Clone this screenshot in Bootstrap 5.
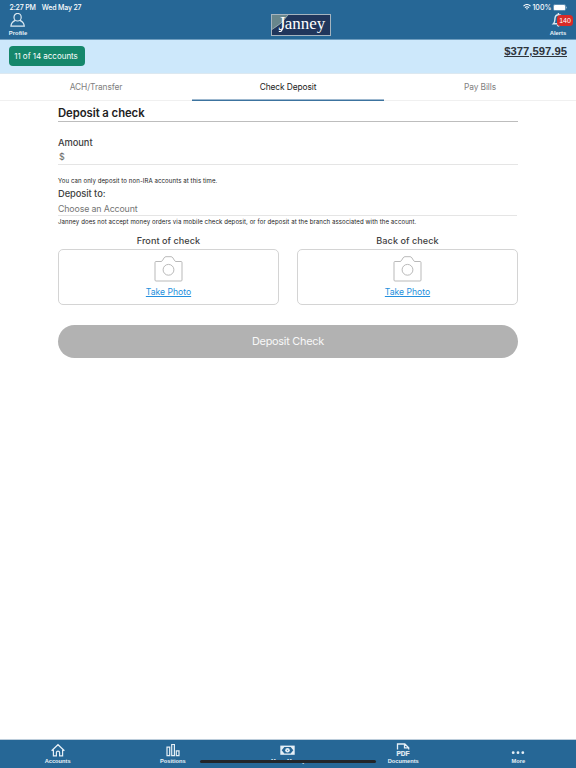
<!DOCTYPE html>
<html lang="en">
<head>
<meta charset="utf-8">
<meta name="viewport" content="width=device-width, initial-scale=1">
<title>Janney – Check Deposit</title>
<link href="https://cdn.jsdelivr.net/npm/bootstrap@5.3.0/dist/css/bootstrap.min.css" rel="stylesheet">
<style>
html,body{height:100%}
body{font-family:Inter,"Liberation Sans",sans-serif;color:#333;background:#fff;overflow:hidden}
svg{display:block;flex:none}
.arial{font-family:"Liberation Sans",Arial,sans-serif}
.app-header{height:40px;background:#266796;border-bottom:1px solid #6e9dbf;color:#fff}
.status-line{height:13px;padding:1px 9px 0 9.5px;font-size:7px;line-height:13px;font-weight:500;letter-spacing:-.18px}
.status-left{gap:6px}
.status-right{gap:1.5px;letter-spacing:.05px}
.head-btn{width:36px;font-size:5.9px;line-height:8px;font-weight:700;color:#e8f1f7}
.head-btn svg{margin-bottom:1.5px}
.alert-count{left:17px;top:2px;width:16px;height:11px;border-radius:3.5px;background:#d92b27;color:#fff;font-size:7px;line-height:11px;font-weight:400}
.brand{width:60px;height:22px;margin:1px 0 0 26px}
.summary{height:34px;background:#cde8fb;border-bottom:1px solid #dce8f0;padding:6px 9px 0}
.acct-pill{width:76px;height:20px;background:#15876b;color:#fff;border-radius:4px;font-size:8px;line-height:20px;letter-spacing:-.03px;padding-right:2px}
.balance{font-size:11.3px;line-height:10px;font-weight:700;color:#2e343b;text-decoration:underline;text-underline-offset:1px;text-decoration-thickness:1px}
.tabs{height:27px;border-bottom:1px solid #f0f0f0}
.tabs .tab-item{flex:1 1 0;height:27px;font-size:8.4px;line-height:27px;letter-spacing:-.1px;color:#808080;text-align:center;text-decoration:none}
.tabs .tab-item.current{color:#222;box-shadow:inset 0 -1.5px #3c739f}
.deposit-form{padding:0 58px}
.form-heading{height:21px;border-bottom:1px solid #bdbdbd;font-size:11.3px;line-height:25px;font-weight:600;color:#222;margin:0 0 13px;letter-spacing:-.05px}
.field-label{font-size:9.3px;line-height:15px;font-weight:500;color:#404040;height:15px;letter-spacing:-.05px}
.amount-box{height:15px;border-bottom:1px solid #e5e5e5;font-size:9px;line-height:14px;padding-left:1px;color:#666;margin-bottom:10px}
.fine{height:11px;font-size:6.05px;line-height:11px;color:#222;white-space:nowrap;letter-spacing:.092px}
.account-box{height:15px;border-bottom:1px solid #e5e5e5;margin-right:1px;font-size:8.8px;line-height:16px;color:#757575;letter-spacing:-.13px}
.photo-grid{gap:18px;margin-top:6px}
.photo-col{flex:1 1 0}
.photo-label{height:16px;font-size:9.1px;line-height:16px;font-weight:500;color:#404040;letter-spacing:.05px}
.photo-box{height:56px;border:1px solid #d4d4d4;border-radius:5px;padding-top:6px}
.photo-box a{font-size:8.6px;line-height:12px;color:#248fdd;text-underline-offset:1px;text-decoration-thickness:1px;margin-top:4px}
.submit-btn{height:33px;border:0;border-radius:17px;background:#b2b2b2;color:#f8f8f8;font-size:10.9px;line-height:33px;letter-spacing:-.26px;margin-top:20px;padding:0}
.bottom-nav{height:29px;background:#266796;border-top:1px solid #bccddb;color:#e8f1f7}
.bottom-nav a{flex:1 1 0;color:inherit;text-decoration:none;font-size:5.7px;line-height:7px;font-weight:700;padding-top:3px}
.bottom-nav .ico{height:15px}
.home-bar{left:200px;bottom:4.6px;width:176px;height:3px;border-radius:2px;background:#222529}
</style>
<script src="https://cdn.jsdelivr.net/npm/bootstrap@5.3.0/dist/js/bootstrap.bundle.min.js"></script>
</head>
<body class="d-flex flex-column">
<header class="app-header flex-shrink-0">
  <div class="status-line d-flex justify-content-between">
    <div class="status-left d-flex"><span>2:27 PM</span><span>Wed May 27</span></div>
    <div class="status-right d-flex align-items-center">
      <svg width="8" height="6" viewBox="0 0 8 6" fill="none" stroke="#fff" stroke-width="1.1"><path d="M.5 2.1Q4-1 7.5 2.1M1.9 3.6Q4 1.8 6.1 3.6"/><path d="M2.9 4.6 4 5.8l1.1-1.2Q4 3.9 2.9 4.6z" fill="#fff" stroke="none"/></svg>
      <span>100%</span>
      <svg width="14" height="7" viewBox="0 0 14 7"><rect x=".4" y=".4" width="12.2" height="6.2" rx="1.7" fill="none" stroke="#8bb0cb" stroke-width=".6"/><rect x=".9" y=".9" width="11.2" height="5.2" rx="1.2" fill="#fff"/><path d="M13.4 2.7v1.7" stroke="#a9c5da" stroke-width=".8"/></svg>
    </div>
  </div>
  <div class="d-flex arial">
    <div class="head-btn d-flex flex-column align-items-center me-auto">
      <svg width="16" height="14" viewBox="0 0 16 14" fill="none" stroke="#dce9f2" stroke-width="1.2"><ellipse cx="7.6" cy="4.2" rx="3.6" ry="3.8"/><path d="M5.3 7.4C2.6 8.5 1.2 10.2.9 13.2h13.4C14 10.2 12.6 8.5 9.9 7.4"/></svg>
      <span>Profile</span>
    </div>
    <svg class="brand" viewBox="0 0 60 22"><rect x=".5" y=".5" width="59" height="21" fill="#20365c" stroke="#a5b4bf"/><path d="M1 1h16Q11 10 1 15.5z" fill="#68868c"/><path d="M17 1Q11 10 1 15.5" fill="none" stroke="#a9bcc1" stroke-width=".7"/><path d="M7.8 17.3q3.2 1 3.6-3.3" fill="none" stroke="#fff" stroke-width="1.2"/><text x="7.5" y="15.5" font-family="Liberation Serif,serif" font-size="19" fill="#fff" textLength="7" lengthAdjust="spacingAndGlyphs">J</text><text x="13.7" y="15" font-family="Liberation Serif,serif" font-size="16.5" fill="#fff" textLength="40.5" lengthAdjust="spacingAndGlyphs">anney</text></svg>
    <div class="head-btn d-flex flex-column align-items-center position-relative ms-auto">
      <svg width="14" height="14" viewBox="0 0 14 14" fill="none" stroke="#dce9f2" stroke-width="1.4"><path d="M2.4 10.8C4 9.3 3.8 7.4 4 5.1 4.3 2.8 5.8 1.7 7.4 1.7s3.6 1.1 3.9 3.4c.2 2.3-.1 4.2 1.7 5.7zM6.2 12.2q1.2 1.6 2.4 0M7.4 0v2"/></svg>
      <span>Alerts</span>
      <span class="alert-count position-absolute text-center">140</span>
    </div>
  </div>
</header>
<section class="summary d-flex justify-content-between align-items-start flex-shrink-0">
  <span class="acct-pill text-center">11 of 14 accounts</span>
  <span class="balance arial">$377,597.95</span>
</section>
<nav class="tabs d-flex flex-shrink-0">
  <a class="tab-item" href="#">ACH/Transfer</a>
  <a class="tab-item current" href="#">Check Deposit</a>
  <a class="tab-item" href="#">Pay Bills</a>
</nav>
<main class="deposit-form flex-grow-1">
  <h1 class="form-heading">Deposit a check</h1>
  <div class="field-label">Amount</div>
  <div class="amount-box">$</div>
  <div class="fine">You can only deposit to non-IRA accounts at this time.</div>
  <div class="field-label">Deposit to:</div>
  <div class="account-box">Choose an Account</div>
  <div class="fine">Janney does not accept money orders via mobile check deposit, or for deposit at the branch associated with the account.</div>
  <div class="photo-grid d-flex text-center">
    <div class="photo-col">
      <div class="photo-label">Front of check</div>
      <div class="photo-box d-flex flex-column align-items-center">
        <svg width="30" height="26" viewBox="0 0 30 26" fill="none" stroke="#b9b9b9"><path d="M2 5.5h5q1 0 1.7-1.3L10 2q.7-1.3 2-1.3h5q1.3 0 2 1.3l1.3 2.2q.7 1.3 1.7 1.3h5q1 0 1 1v17.5q0 1-1 1H2q-1 0-1-1V6.5q0-1 1-1z"/><circle cx="14.5" cy="13.8" r="5.4"/></svg>
        <a href="#">Take Photo</a>
      </div>
    </div>
    <div class="photo-col">
      <div class="photo-label">Back of check</div>
      <div class="photo-box d-flex flex-column align-items-center">
        <svg width="30" height="26" viewBox="0 0 30 26" fill="none" stroke="#b9b9b9"><path d="M2 5.5h5q1 0 1.7-1.3L10 2q.7-1.3 2-1.3h5q1.3 0 2 1.3l1.3 2.2q.7 1.3 1.7 1.3h5q1 0 1 1v17.5q0 1-1 1H2q-1 0-1-1V6.5q0-1 1-1z"/><circle cx="14.5" cy="13.8" r="5.4"/></svg>
        <a href="#">Take Photo</a>
      </div>
    </div>
  </div>
  <button class="submit-btn d-block w-100" type="button">Deposit Check</button>
</main>
<footer class="bottom-nav arial d-flex text-center position-relative flex-shrink-0">
  <a href="#"><div class="ico d-flex justify-content-center"><svg width="14" height="14" viewBox="0 0 14 14" fill="none" stroke="#e5eff6" stroke-width="1.2"><path d="M.6 7.8 7 1.7l6.4 6.1M2.4 6.7v6.1h3V9.6q0-1.5 1.6-1.5t1.6 1.5v3.2h3V6.7"/></svg></div>Accounts</a>
  <a href="#"><div class="ico d-flex justify-content-center"><svg width="14" height="14" viewBox="0 0 14 14" fill="none" stroke="#e5eff6" stroke-width="1.2"><path d="M1 4.2h2.7v8.4H1zM5.7 1.5h2.7v11.1H5.7zM10.3 7.8H13v4.8h-2.7z"/></svg></div>Positions</a>
  <a href="#"><div class="ico d-flex justify-content-center"><svg width="16" height="14" viewBox="0 0 16 14"><rect x=".3" y="2.6" width="14.4" height="9.2" fill="#e5eff6"/><path d="M4.3 3.9h6.4L13.3 7.2l-2.6 3.3H4.3L1.7 7.2z" fill="#266796"/><ellipse cx="7.5" cy="7.2" rx="2.3" ry="2.3" fill="#e5eff6"/><circle cx="7.5" cy="7.2" r=".5" fill="#266796"/></svg></div>Move Money</a>
  <a href="#"><div class="ico d-flex justify-content-center"><svg width="14" height="14" viewBox="0 0 14 14" fill="none" stroke="#e5eff6" stroke-width="1.3"><path d="M1.5 6.5V1h7.3l3.9 3.7v1.8M8.5 1v3.8h4.2"/><text x=".5" y="12.8" font-family="Liberation Sans,sans-serif" font-size="7" font-weight="700" fill="#e5eff6" stroke="#e5eff6" stroke-width=".2" textLength="13" lengthAdjust="spacingAndGlyphs">PDF</text></svg></div>Documents</a>
  <a href="#"><div class="ico d-flex justify-content-center"><svg width="14" height="14" viewBox="0 0 14 14" fill="#e5eff6"><circle cx="2.2" cy="9.7" r="1.4"/><circle cx="7" cy="9.7" r="1.4"/><circle cx="11.8" cy="9.7" r="1.4"/></svg></div>More</a>
  <div class="home-bar position-absolute"></div>
</footer>
</body>
</html>
